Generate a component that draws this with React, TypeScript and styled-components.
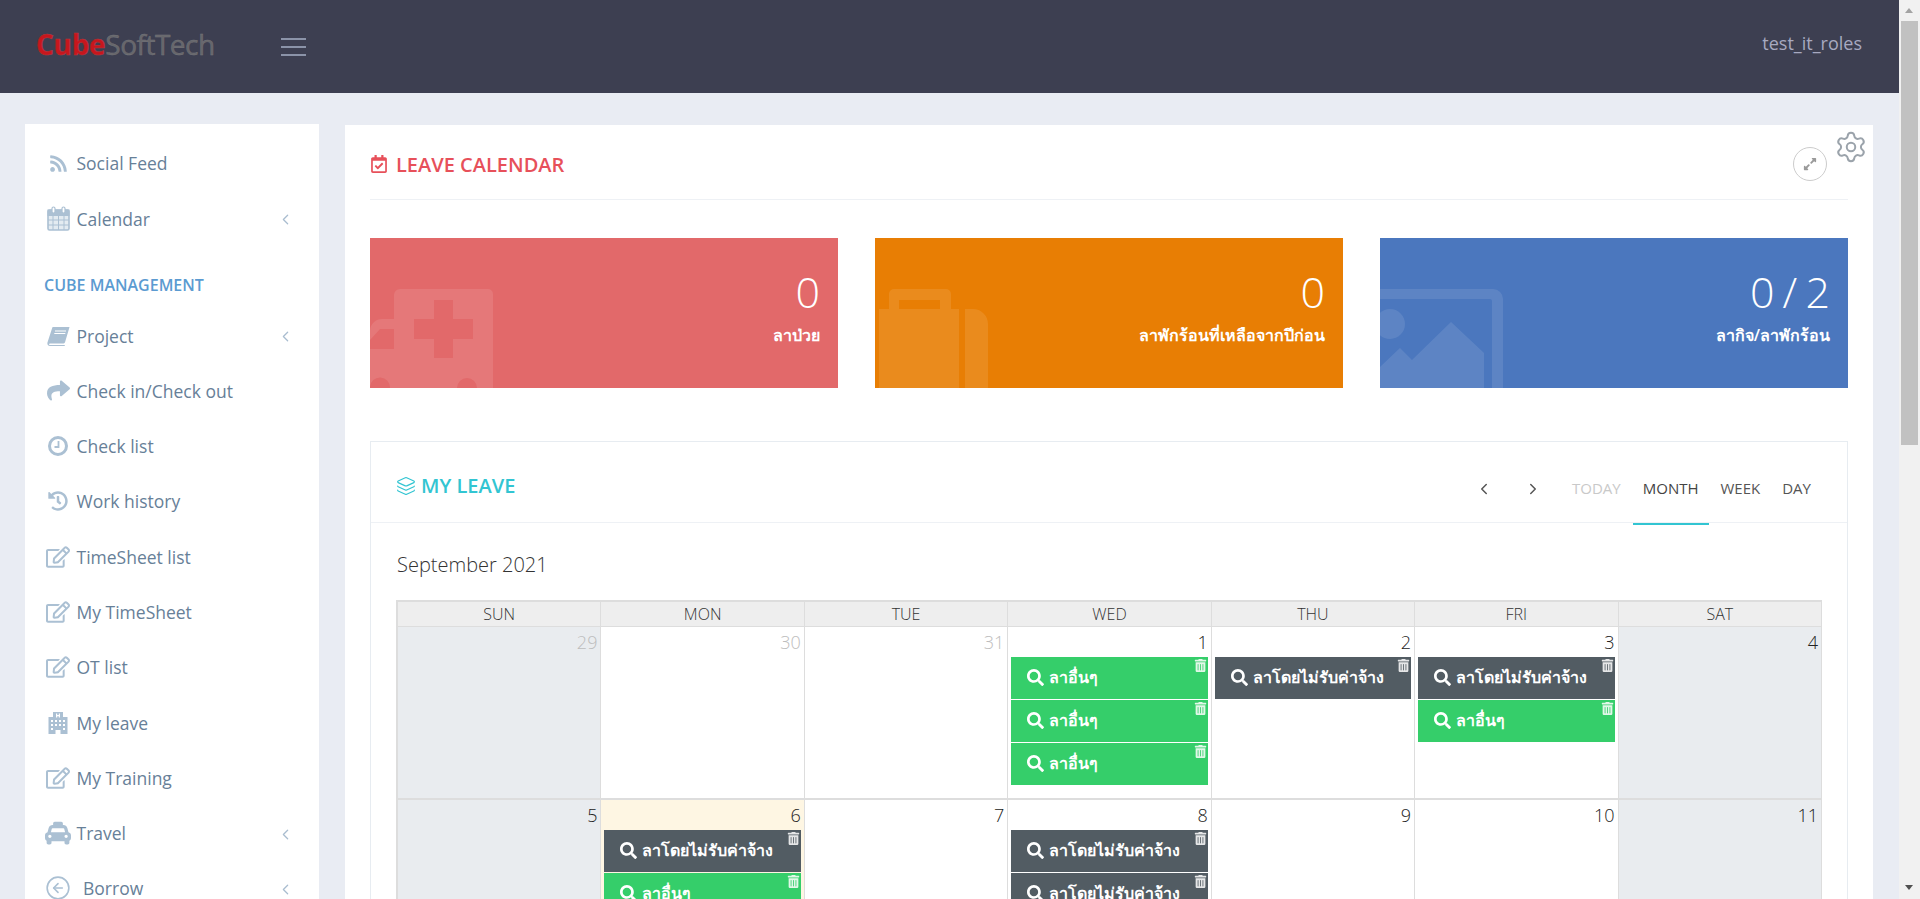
import React from "react";
import styled, { createGlobalStyle } from "styled-components";
import {
  FaRss,
  FaShare,
  FaHistory,
  FaRegEdit,
  FaTaxi,
  FaRegCalendarCheck,
  FaExpandAlt,
  FaSearch,
  FaTrashAlt,
} from "react-icons/fa";
import { ChevronLeft, ChevronRight, CircleArrowLeft, Layers, Settings } from "lucide-react";

const GlobalStyle = createGlobalStyle`
  html, body {
    margin: 0;
    height: 100%;
    overflow: hidden;
    background: #e9ecf3;
    font-family: "Open Sans", "Noto Sans", sans-serif;
  }
  * { box-sizing: border-box; }
`;

const Page = styled.div`
  display: flex;
  height: 100vh;
  overflow: hidden;
`;

const Content = styled.div`
  flex: 1;
  min-width: 0;
  overflow: hidden;
`;

const ScrollTrack = styled.div`
  width: 21px;
  flex: none;
  background: #f1f1f1;
  padding: 21px 2px 0;
  position: relative;
  &::before,
  &::after {
    content: "";
    position: absolute;
    left: 6px;
    border-left: 4.5px solid transparent;
    border-right: 4.5px solid transparent;
  }
  &::before {
    top: 8px;
    border-bottom: 5px solid #a3a3a3;
  }
  &::after {
    bottom: 9px;
    border-top: 5px solid #505050;
  }
`;

const ScrollThumb = styled.div`
  height: 424px;
  background: #c1c1c1;
`;

const Header = styled.header`
  height: 93px;
  background: #3d3f51;
  display: flex;
  align-items: center;
  padding: 0 37px 6px 36px;
`;

const Logo = styled.div`
  width: 245px;
  font-size: 28px;
  line-height: 36px;
  letter-spacing: -0.5px;
  font-weight: 400;
  color: #66666b;
  -webkit-text-stroke: 0.4px #77777c;
  b {
    font-weight: 700;
    letter-spacing: -0.3px;
    color: #c8161d;
    -webkit-text-stroke: 0.5px #b03a40;
  }
`;

const Burger = styled.div`
  width: 25px;
  height: 18px;
  margin-top: 6px;
  display: flex;
  flex-direction: column;
  justify-content: space-between;
  i {
    display: block;
    height: 2px;
    background: #8b93a8;
  }
`;

const UserName = styled.div`
  margin-left: auto;
  margin-top: -1px;
  font-size: 18px;
  font-weight: 500;
  color: #a7a9c0;
`;

const Body = styled.div`
  display: flex;
  align-items: flex-start;
  gap: 26px;
  padding: 31px 26px 0 25px;
`;

const Sidebar = styled.nav`
  width: 294px;
  flex: none;
  background: #fff;
  padding-top: 11.7px;
`;

const MenuItem = styled.div`
  height: 55.3px;
  display: flex;
  align-items: center;
  padding: 0 25px 0 21px;
  color: #678098;
  font-size: 17.5px;
`;

const MenuIcon = styled.span<{ $wide?: boolean }>`
  width: 24px;
  flex: none;
  margin-right: ${(p) => (p.$wide ? "13px" : "6.5px")};
  display: flex;
  align-items: center;
  justify-content: center;
  color: #abc0d3;
  svg {
    display: block;
    flex: none;
  }
`;

const MenuArrow = styled(ChevronLeft)`
  margin-left: auto;
  margin-top: 2px;
  color: #a9bdd0;
`;

const SectionTitle = styled.div`
  height: 61.6px;
  display: flex;
  align-items: flex-end;
  padding: 0 0 12px 19px;
  font-size: 16px;
  font-weight: 600;
  color: #5b9bd1;
`;

const Main = styled.main`
  flex: 1;
  min-width: 0;
  margin-top: 1px;
  background: #fff;
  padding: 0 25px;
  position: relative;
`;

const GearButton = styled(Settings)`
  position: absolute;
  top: 5px;
  right: 5px;
  color: #9ba3ab;
`;

const TitleBar = styled.div`
  height: 75px;
  display: flex;
  align-items: center;
  border-bottom: 1px solid #eef1f5;
  padding: 4px 21px 0 0;
`;

const PageTitle = styled.h1`
  margin: 0;
  display: flex;
  align-items: center;
  gap: 8px;
  font-size: 20px;
  font-weight: 600;
  color: #e7505a;
  text-transform: uppercase;
`;

const ExpandButton = styled.div`
  margin-left: auto;
  width: 34px;
  height: 34px;
  border: 1px solid #ccc;
  border-radius: 50%;
  display: flex;
  align-items: center;
  justify-content: center;
  color: #9a9a9a;
`;

const Stats = styled.div`
  display: grid;
  grid-template-columns: repeat(3, 1fr);
  gap: 37px;
  margin: 38px 0 53px;
`;

const StatCard = styled.div<{ $bg: string }>`
  height: 150px;
  background: ${(p) => p.$bg};
  color: #fff;
  text-align: right;
  padding: 24px 18px 0;
  position: relative;
  overflow: hidden;
`;

const StatArt = styled.svg`
  position: absolute;
  left: 0;
  bottom: 0;
  fill: rgba(255, 255, 255, 0.1);
`;

const StatValue = styled.div`
  position: relative;
  font-size: 43px;
  line-height: 60px;
  font-weight: 300;
  word-spacing: -3px;
`;

const StatLabel = styled.div`
  position: relative;
  margin-top: 2px;
  font-size: 16px;
  line-height: 22px;
  font-weight: 600;
`;

const Panel = styled.section`
  border: 1px solid #e7ecf1;
  padding: 0 25px;
`;

const PanelHead = styled.div`
  height: 81px;
  margin: 0 -25px;
  padding: 0 25px;
  display: flex;
  align-items: center;
  border-bottom: 1px solid #eef1f5;
`;

const PanelTitle = styled.h2`
  margin: 0;
  padding-top: 7px;
  display: flex;
  align-items: center;
  gap: 5px;
  font-size: 20px;
  font-weight: 600;
  color: #32c5d2;
  text-transform: uppercase;
`;

const ViewTabs = styled.div`
  margin-left: auto;
  align-self: stretch;
  display: flex;
  align-items: center;
  color: #555;
`;

const NavChevrons = styled.div`
  display: flex;
  gap: 31px;
  margin: 14px 19px 0 0;
  color: #555;
`;

const Tab = styled.div<{ $active?: boolean; $muted?: boolean }>`
  height: 100%;
  padding: 7px 10px 0;
  margin: 0 1px;
  display: flex;
  align-items: center;
  font-size: 15px;
  color: ${(p) => (p.$muted ? "#c9c9c9" : p.$active ? "#444" : "#555")};
  border-bottom: ${(p) => (p.$active ? "2px solid #32c5d2" : "2px solid transparent")};
  transform: translateY(3px);
`;

const MonthTitle = styled.div`
  height: 77px;
  display: flex;
  align-items: center;
  font-size: 20px;
  font-weight: 300;
  color: #333;
  padding: 5px 0 0 1px;
`;

const CalendarGrid = styled.div`
  display: grid;
  grid-template-columns: repeat(7, 1fr);
  border-top: 2px solid #ddd;
  border-left: 2px solid #ddd;
`;

const DayName = styled.div`
  height: 25px;
  background: #eee;
  border-right: 1px solid #ddd;
  border-bottom: 1px solid #ddd;
  text-align: center;
  font-size: 16px;
  font-weight: 300;
  line-height: 25px;
  color: #333;
`;

const DayCell = styled.div<{ $tone?: "weekend" | "today" }>`
  height: 173px;
  padding: 0 3px;
  border-right: 1px solid #ddd;
  border-bottom: 2px solid #ddd;
  background: ${(p) => (p.$tone === "weekend" ? "#e9ecef" : p.$tone === "today" ? "#fef6e3" : "#fff")};
`;

const DayNumber = styled.div<{ $other?: boolean }>`
  height: 30px;
  text-align: right;
  font-size: 18px;
  line-height: 30px;
  font-weight: 300;
  color: ${(p) => (p.$other ? "#bdbdbd" : "#222")};
`;

const LeaveEvent = styled.div<{ $kind: "other" | "unpaid" }>`
  position: relative;
  height: 42px;
  margin-bottom: 1px;
  padding: 0 0 1px 16px;
  display: flex;
  align-items: center;
  gap: 5px;
  background: ${(p) => (p.$kind === "other" ? "#35ce6a" : "#525c63")};
  color: #fff;
  font-size: 16px;
  font-weight: 600;
  white-space: nowrap;
`;

const TrashIcon = styled(FaTrashAlt)`
  position: absolute;
  top: 2px;
  right: 1px;
  opacity: 0.85;
`;

function CalendarIcon() {
  return (
    <svg width="23" height="25" viewBox="0 0 23 25" fill="none" stroke="currentColor">
      <rect x="1" y="4" width="21" height="20" rx="1.5" fill="#e3ebf1" strokeWidth="1.6" />
      <rect x="1" y="4" width="21" height="5.5" fill="currentColor" strokeWidth="1" />
      <path d="M1 14h21M1 19h21M6 10v14M11.5 10v14M17 10v14" strokeWidth="1" />
      <rect x="5" y="1" width="3" height="6" rx="1.5" fill="#fff" strokeWidth="1.2" />
      <rect x="15" y="1" width="3" height="6" rx="1.5" fill="#fff" strokeWidth="1.2" />
    </svg>
  );
}

function BookIcon() {
  return (
    <svg width="23" height="20" viewBox="0 0 23 20" fill="currentColor">
      <path d="M6 1h16.5l-.4 1.4-4 13.6c-.3 1.2-1.2 1.5-2.5 1.5H3.5c-1 0-1.5.4-1.4 1 .1.4.5.5 1.1.5H18l-.3.8c-.2.2-.5.2-.8.2H3c-1.8 0-3-1.4-2.6-3.2L5 2.500C5.200 1.600 5.500 1 6 1z" />
      <path d="M8 5h11M7.300 7.500h11" stroke="#fff" strokeWidth="1.200" />
    </svg>
  );
}

function ClockIcon() {
  return (
    <svg width="20" height="20" viewBox="0 0 20 20" fill="none" stroke="currentColor">
      <circle cx="10" cy="10" r="8.500" strokeWidth="3" />
      <path d="M10.500 5v6H6.500" strokeWidth="1.800" />
    </svg>
  );
}

function HospitalIcon() {
  return (
    <svg width="20" height="23" viewBox="0 0 20 23" fill="currentColor" fillRule="evenodd">
      <path d="M5 1h10v5h4.500v17h-7v-4h-5v4H.500V6H5V1zM8 2.500v4h1.200V5.200h1.600v1.300H12v-4h-1.200v1.400H9.200V2.500H8zM3 9v2h2V9H3zm4 0v2h2V9H7zm4 0v2h2V9h-2zm4 0v2h2V9h-2zM3 13v2h2v-2H3zm4 0v2h2v-2H7zm4 0v2h2v-2h-2zm4 0v2h2v-2h-2zM3 17v2h2v-2H3zm12 0v2h2v-2h-2z" />
    </svg>
  );
}

type MenuEntry = { label: string; icon: React.ReactNode; arrow?: boolean; wide?: boolean };

const topMenu: MenuEntry[] = [
  { label: "Social Feed", icon: <FaRss size={19} /> },
  { label: "Calendar", icon: <CalendarIcon />, arrow: true },
];

const mainMenu: MenuEntry[] = [
  { label: "Project", icon: <BookIcon />, arrow: true },
  { label: "Check in/Check out", icon: <FaShare size={23} /> },
  { label: "Check list", icon: <ClockIcon /> },
  { label: "Work history", icon: <FaHistory size={20} /> },
  { label: "TimeSheet list", icon: <FaRegEdit size={24} /> },
  { label: "My TimeSheet", icon: <FaRegEdit size={24} /> },
  { label: "OT list", icon: <FaRegEdit size={24} /> },
  { label: "My leave", icon: <HospitalIcon /> },
  { label: "My Training", icon: <FaRegEdit size={24} /> },
  { label: "Travel", icon: <FaTaxi size={26} />, arrow: true },
  { label: "Borrow", icon: <CircleArrowLeft size={26} strokeWidth={1.5} />, arrow: true, wide: true },
];

const OTHER = "ลาอื่นๆ";
const UNPAID = "ลาโดยไม่รับค่าจ้าง";

type Cell = { day: number; other?: boolean; tone?: "weekend" | "today"; events?: ("other" | "unpaid")[] };

const days: Cell[] = [
  { day: 29, other: true, tone: "weekend" },
  { day: 30, other: true },
  { day: 31, other: true },
  { day: 1, events: ["other", "other", "other"] },
  { day: 2, events: ["unpaid"] },
  { day: 3, events: ["unpaid", "other"] },
  { day: 4, tone: "weekend" },
  { day: 5, tone: "weekend" },
  { day: 6, tone: "today", events: ["unpaid", "other"] },
  { day: 7 },
  { day: 8, events: ["unpaid", "unpaid"] },
  { day: 9 },
  { day: 10 },
  { day: 11, tone: "weekend" },
];

function renderMenu(items: MenuEntry[]) {
  return items.map((item) => (
    <MenuItem key={item.label}>
      <MenuIcon $wide={item.wide}>{item.icon}</MenuIcon>
      {item.label}
      {item.arrow && <MenuArrow size={17} strokeWidth={1.8} />}
    </MenuItem>
  ));
}

export default function App() {
  return (
    <Page>
      <GlobalStyle />
      <Content>
        <Header>
          <Logo>
            <b>Cube</b>SoftTech
          </Logo>
          <Burger>
            <i />
            <i />
            <i />
          </Burger>
          <UserName>test_it_roles</UserName>
        </Header>
        <Body>
          <Sidebar>
            {renderMenu(topMenu)}
            <SectionTitle>CUBE MANAGEMENT</SectionTitle>
            {renderMenu(mainMenu)}
          </Sidebar>
          <Main>
            <GearButton size={34} strokeWidth={1.4} />
            <TitleBar>
              <PageTitle>
                <FaRegCalendarCheck size={18} />
                Leave Calendar
              </PageTitle>
              <ExpandButton>
                <FaExpandAlt size={14} />
              </ExpandButton>
            </TitleBar>
            <Stats>
              <StatCard $bg="#e2696a">
                <StatArt width="130" height="100" viewBox="0 0 130 100" fillRule="evenodd">
                  <path d="M30 1h88a5 5 0 0 1 5 5v94h-16a10 10 0 0 0-20 0H24V7a6 6 0 0 1 6-6zM64 12v19H44v20h20v19h19V51h20V31H83V12H64z" />
                  <path d="M0 42a12 12 0 0 1 12-11h12v10H10L0 52zM0 61h24v39h-4a10 10 0 0 0-20-1z" />
                </StatArt>
                <StatValue>0</StatValue>
                <StatLabel>ลาป่วย</StatLabel>
              </StatCard>
              <StatCard $bg="#e87e04">
                <StatArt width="130" height="100" viewBox="0 0 130 100">
                  <path fillRule="evenodd" d="M19 1h52a5 5 0 0 1 5 5v15H65V12H24v9H14V6a5 5 0 0 1 5-5z" />
                  <path d="M4 21h80v79H4zM90 21h8a15 15 0 0 1 15 15v64H90z" />
                </StatArt>
                <StatValue>0</StatValue>
                <StatLabel>ลาพักร้อนที่เหลือจากปีก่อน</StatLabel>
              </StatCard>
              <StatCard $bg="#4b77be">
                <StatArt width="130" height="100" viewBox="0 0 130 100">
                  <path d="M0 1h113a10 10 0 0 1 10 10v89h-11V13a2 2 0 0 0-2-2H0z" />
                  <circle cx="10" cy="36" r="15" />
                  <path d="M0 79l20-19 12 12 39-38 33 31v35H0z" />
                </StatArt>
                <StatValue>0 / 2</StatValue>
                <StatLabel>ลากิจ/ลาพักร้อน</StatLabel>
              </StatCard>
            </Stats>
            <Panel>
              <PanelHead>
                <PanelTitle>
                  <Layers size={20} strokeWidth={1.4} />
                  My Leave
                </PanelTitle>
                <ViewTabs>
                  <NavChevrons>
                    <ChevronLeft size={18} />
                    <ChevronRight size={18} />
                  </NavChevrons>
                  <Tab $muted>TODAY</Tab>
                  <Tab $active>MONTH</Tab>
                  <Tab>WEEK</Tab>
                  <Tab>DAY</Tab>
                </ViewTabs>
              </PanelHead>
              <MonthTitle>September 2021</MonthTitle>
              <CalendarGrid>
                {["SUN", "MON", "TUE", "WED", "THU", "FRI", "SAT"].map((name) => (
                  <DayName key={name}>{name}</DayName>
                ))}
                {days.map((cell) => (
                  <DayCell key={`${cell.day}-${cell.other}`} $tone={cell.tone}>
                    <DayNumber $other={cell.other}>{cell.day}</DayNumber>
                    {cell.events?.map((kind, i) => (
                      <LeaveEvent key={i} $kind={kind}>
                        <FaSearch size={17} />
                        {kind === "other" ? OTHER : UNPAID}
                        <TrashIcon size={13} />
                      </LeaveEvent>
                    ))}
                  </DayCell>
                ))}
              </CalendarGrid>
            </Panel>
          </Main>
        </Body>
      </Content>
      <ScrollTrack>
        <ScrollThumb />
      </ScrollTrack>
    </Page>
  );
}
